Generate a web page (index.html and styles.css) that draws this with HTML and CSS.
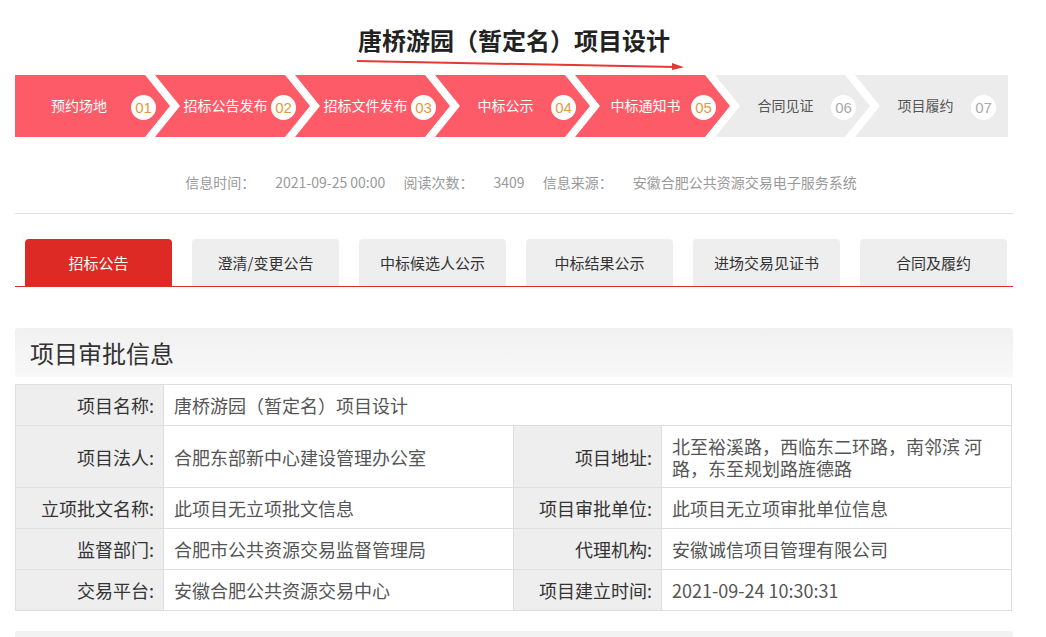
FILE: index.html
```html
<!DOCTYPE html>
<html lang="zh-CN">
<head>
    <meta charset="UTF-8">
    <meta name="viewport" content="width=device-width, initial-scale=1.0">
    <title>唐桥游园（暂定名）项目设计</title>
    <link rel="stylesheet" href="styles.css">
</head>
<body>

    <div class="page">

        <!-- Title -->
        <div class="title-wrap">
            <h1 class="title">唐桥游园（暂定名）项目设计</h1>
            <svg class="title-arrow" width="340" height="14" viewBox="0 0 340 14">
                <path d="M1 2 L320 8" stroke="#e53935" stroke-width="2" fill="none"/>
                <path d="M316 4 L328 8.3 L316 11 Z" fill="#e53935"/>
            </svg>
        </div>

        <!-- Progress steps -->
        <div class="steps">
            <div class="step step-first done"><span class="step-name">预约场地</span><span class="step-no">01</span></div>
            <div class="step done"><span class="step-name">招标公告发布</span><span class="step-no">02</span></div>
            <div class="step done"><span class="step-name">招标文件发布</span><span class="step-no">03</span></div>
            <div class="step done"><span class="step-name">中标公示</span><span class="step-no">04</span></div>
            <div class="step done"><span class="step-name">中标通知书</span><span class="step-no">05</span></div>
            <div class="step"><span class="step-name">合同见证</span><span class="step-no">06</span></div>
            <div class="step step-last"><span class="step-name">项目履约</span><span class="step-no">07</span></div>
        </div>

        <!-- Info line -->
        <div class="meta">
            <span class="meta-label">信息时间：</span><span class="meta-value">2021-09-25 00:00</span>
            <span class="meta-label">阅读次数：</span><span class="meta-value">3409</span>
            <span class="meta-label">信息来源：</span><span class="meta-value">安徽合肥公共资源交易电子服务系统</span>
        </div>

        <!-- Tabs -->
        <div class="tabs">
            <div class="tab active">招标公告</div>
            <div class="tab">澄清/变更公告</div>
            <div class="tab">中标候选人公示</div>
            <div class="tab">中标结果公示</div>
            <div class="tab">进场交易见证书</div>
            <div class="tab">合同及履约</div>
        </div>

        <!-- Approval info -->
        <div class="section-head">项目审批信息</div>
        <table class="info-table">
            <tr>
                <th>项目名称:</th>
                <td colspan="3">唐桥游园（暂定名）项目设计</td>
            </tr>
            <tr>
                <th>项目法人:</th>
                <td>合肥东部新中心建设管理办公室</td>
                <th>项目地址:</th>
                <td class="multi">北至裕溪路，西临东二环路，南邻滨 河路，东至规划路旌德路</td>
            </tr>
            <tr>
                <th>立项批文名称:</th>
                <td>此项目无立项批文信息</td>
                <th>项目审批单位:</th>
                <td>此项目无立项审批单位信息</td>
            </tr>
            <tr>
                <th>监督部门:</th>
                <td>合肥市公共资源交易监督管理局</td>
                <th>代理机构:</th>
                <td>安徽诚信项目管理有限公司</td>
            </tr>
            <tr>
                <th>交易平台:</th>
                <td>安徽合肥公共资源交易中心</td>
                <th>项目建立时间:</th>
                <td>2021-09-24 10:30:31</td>
            </tr>
        </table>

        <div class="section-head next"></div>

    </div>

</body>
</html>
```

FILE: styles.css
```css
body {
    margin: 0;
    background: #fff;
    font-family: "Microsoft YaHei", "Noto Sans CJK SC", sans-serif;
    color: #333;
}
.page {
    width: 998px;
    margin-left: 15px;
}

/* title */
.title-wrap {
    position: relative;
    height: 75px;
    text-align: center;
}
.title {
    margin: 0;
    padding-top: 22px;
    font-size: 24px;
    line-height: 36px;
    font-weight: bold;
    color: #222;
}
.title-arrow {
    position: absolute;
    left: 341px;
    top: 59px;
}

/* steps */
.steps {
    display: flex;
    height: 62px;
}
.step {
    flex: none;
    width: 155px;
    margin-left: -15px;
    display: flex;
    align-items: center;
    padding-left: 25px;
    box-sizing: border-box;
    background: #ececec;
    color: #555;
    font-size: 14px;
    clip-path: polygon(0 0, 130px 0, 155px 50%, 130px 100%, 0 100%, 25px 50%);
}
.step.done {
    background: #fd5b68;
    color: #fff;
}
.step-first {
    margin-left: 0;
    padding-left: 12px;
    clip-path: polygon(0 0, 130px 0, 155px 50%, 130px 100%, 0 100%);
}
.step-last {
    width: 153px;
    clip-path: polygon(0 0, 100% 0, 100% 100%, 0 100%, 25px 50%);
}
.step-name {
    flex: 1;
    text-align: center;
    white-space: nowrap;
    margin-bottom: 3px;
}
.step-no {
    width: 25px;
    height: 25px;
    margin-right: 14px;
    margin-top: 3px;
    border-radius: 50%;
    background: #fff;
    color: #aaa;
    font-family: "Liberation Sans", Arial, sans-serif;
    font-size: 15px;
    line-height: 25px;
    text-align: center;
}
.step.done .step-no {
    color: #e39a3b;
}
.step-last .step-no {
    margin-right: 12px;
}

/* meta */
.meta {
    height: 76px;
    line-height: 90px;
    text-align: center;
    font-size: 14px;
    color: #999;
    border-bottom: 1px solid #e3e3e3;
    padding-left: 14px;
}
.meta-label {
    margin-left: 15px;
    margin-right: 20px;
}
.meta-label:first-child {
    margin-left: 0;
}

/* tabs */
.tabs {
    display: flex;
    gap: 20px;
    margin-top: 25px;
    padding-left: 10px;
    border-bottom: 1px solid #d9302b;
}
.tab {
    width: 147px;
    height: 47px;
    line-height: 48px;
    text-align: center;
    font-size: 15px;
    color: #333;
    background: #eeeeee;
    border-radius: 4px 4px 0 0;
}
.tab.active {
    background: #dd2a25;
    color: #fff;
}

/* section */
.section-head {
    margin-top: 41px;
    height: 49px;
    line-height: 50px;
    padding-left: 15px;
    font-size: 24px;
    color: #333;
    background: linear-gradient(#f1f1f1, #f8f8f8);
    border-radius: 3px;
}
.section-head.next {
    margin-top: 20px;
    height: 20px;
}
.info-table {
    width: 997px;
    margin-top: 7px;
    border-collapse: collapse;
    font-size: 18px;
    line-height: 20px;
}
.info-table th,
.info-table td {
    border: 1px solid #dedede;
    padding: 10px 10px;
    vertical-align: middle;
}
.info-table th {
    width: 128px;
    text-align: right;
    font-weight: normal;
    color: #333;
    background: #eeeeee;
    padding-right: 9px;
    white-space: nowrap;
}
.info-table td {
    width: 329px;
    color: #555;
    background: #fff;
}
.info-table td.multi {
    width: 325px;
    line-height: 22px;
    padding: 9px 14px 8px 10px;
}
```
